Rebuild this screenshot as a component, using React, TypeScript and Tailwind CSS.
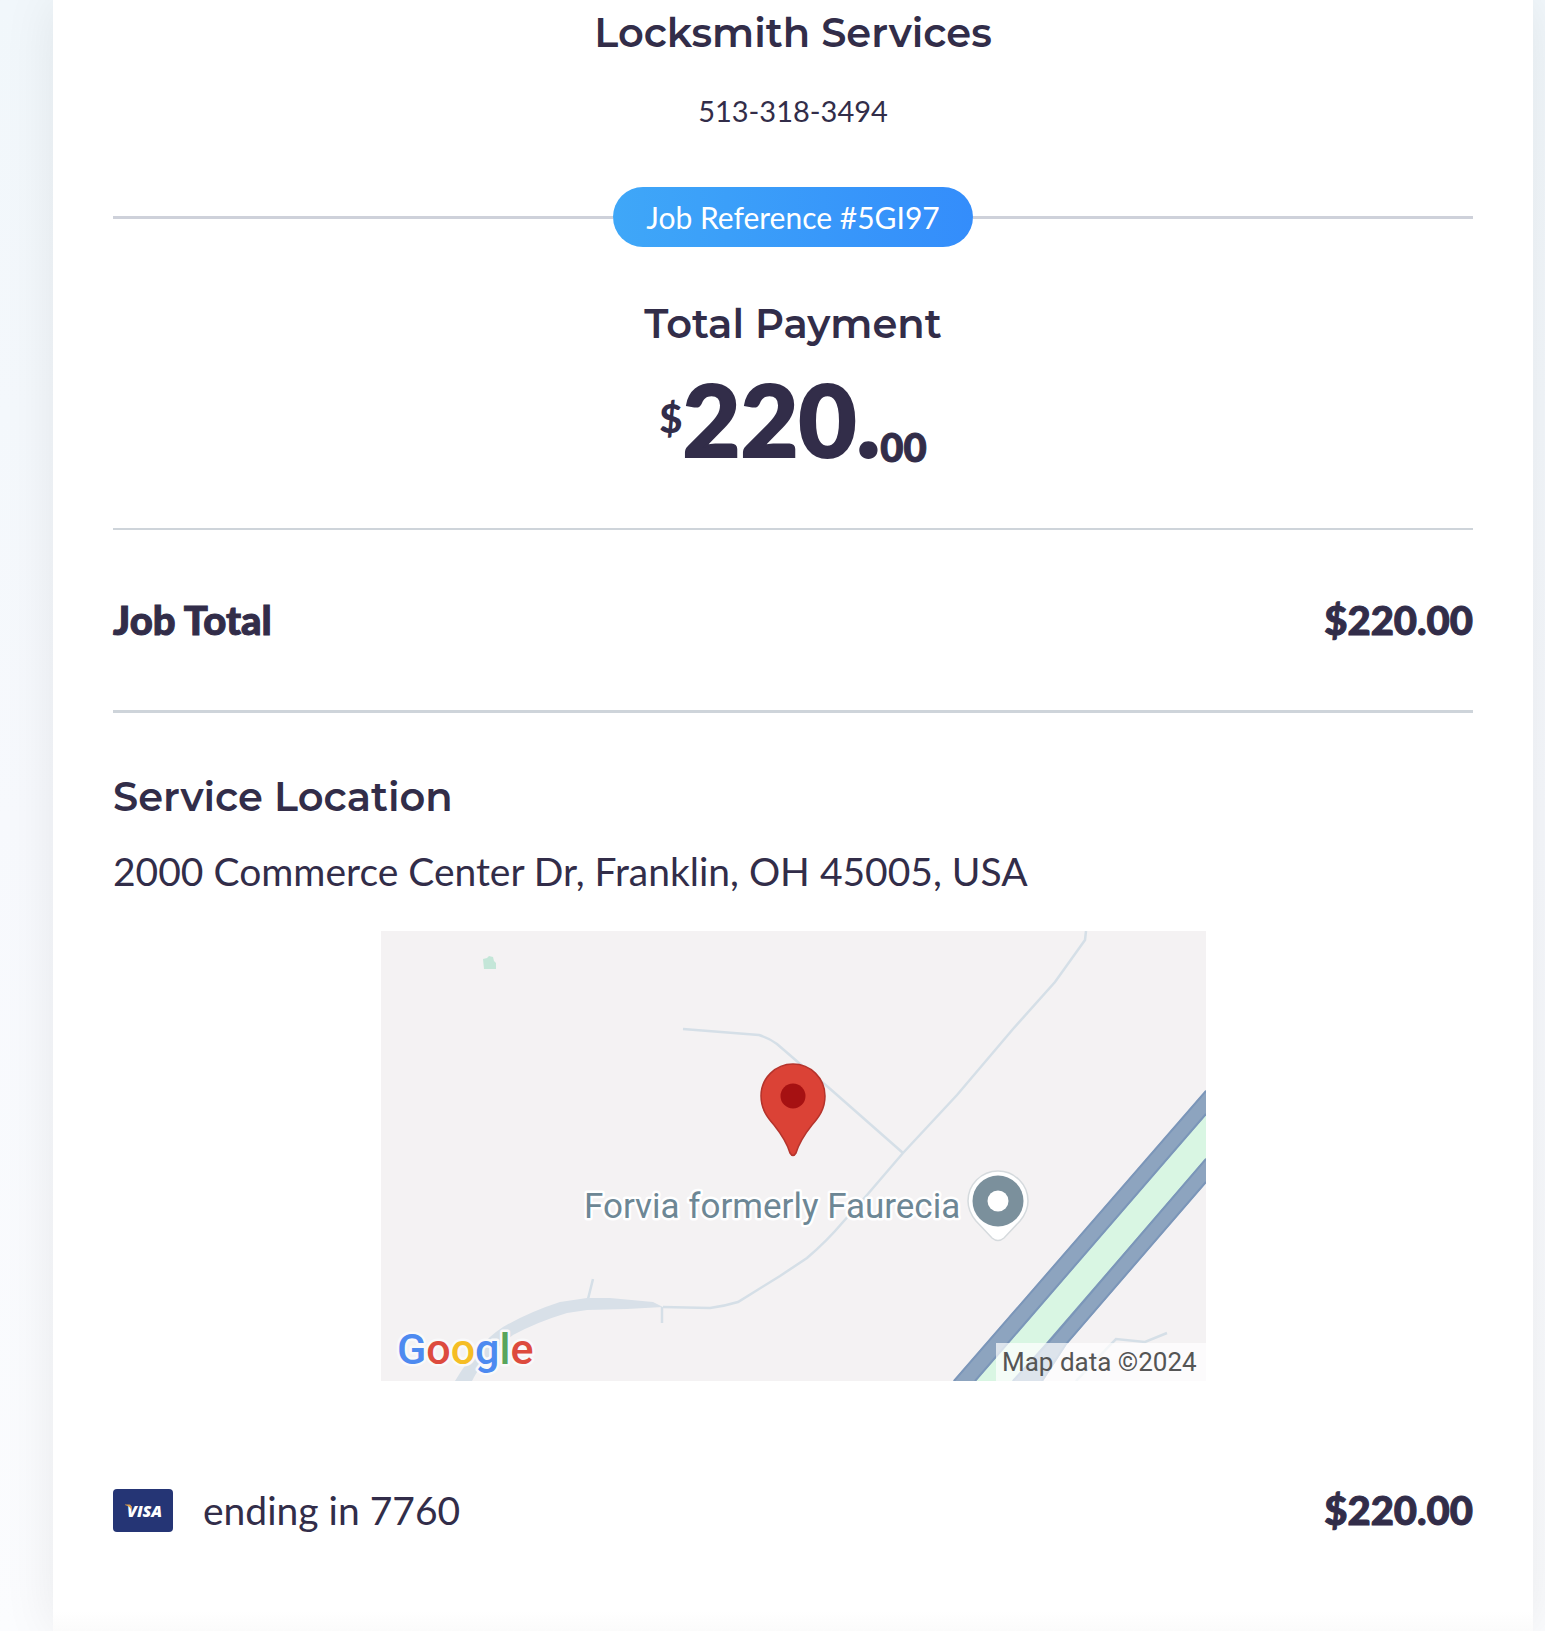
import type { ReactNode } from 'react';

const company = {
    name: 'Locksmith Services',
    phone: '513-318-3494',
};

const job = {
    reference: '5GI97',
    total: 220,
    address: '2000 Commerce Center Dr, Franklin, OH 45005, USA',
    cardLast4: '7760',
};

function formatAmount(amount: number) {
    return `$${amount.toFixed(2)}`;
}

function Heading({ children }: { children: ReactNode }) {
    return (
        <h2 className="font-[Montserrat,Inter,sans-serif] text-[40px] leading-[48px] font-semibold">
            {children}
        </h2>
    );
}

function TotalAmount({ amount }: { amount: number }) {
    const [dollars, cents] = amount.toFixed(2).split('.');

    return (
        <p className="mt-2.5 flex items-baseline justify-center text-[100px] leading-[120px] font-black">
            <span className="relative -top-6 text-[40px] leading-[48px]">
                $
            </span>
            <span className="[-webkit-text-stroke:2px_#322d49]">
                {dollars}.
            </span>
            <span className="relative top-[5px] text-[40px] leading-[48px] [-webkit-text-stroke:1px_#322d49]">
                {cents}
            </span>
        </p>
    );
}

function VisaIcon() {
    return (
        <svg
            viewBox="0 0 60 43"
            className="h-[43px] w-[60px] shrink-0"
            role="img"
            aria-label="Visa"
        >
            <rect width="60" height="43" rx="4" fill="#253575" />
            <text
                x="14"
                y="28"
                fontFamily="Open Sans, sans-serif"
                fontSize="16"
                fontWeight="800"
                fontStyle="italic"
                fill="#fff"
            >
                VISA
            </text>
            <path d="M12 15.500h4.500q1.500 0 1.800 2l.6 4C17.500 18.500 15 16.500 12 16z" fill="#e0a04a" />
        </svg>
    );
}

function ServiceMap() {
    return (
        <svg
            viewBox="0 0 825 450"
            className="w-[825px] max-w-full"
            role="img"
            aria-label="Map of the service location"
        >
            <rect width="825" height="450" fill="#f4f2f3" />
            <path d="M102 28l4-1 2-2 4 1 1 4 2 2v6h-12z" fill="#c4e6d8" />

            {/* local roads */}
            <g fill="none" stroke="#d5dfe7" strokeWidth="2.500">
                <path d="M302 98L340 101 378 104Q388 107 396 113L418 132 447 156 522 222" />
                <path d="M705 0L704 9 674 51 632 98 576 164 522 222 486 264 462 291Q446 310 426 327L399 345 357 371Q344 375 329 377L282 376" />
                <path d="M212 348L207 368M281 376V392" />
                <path d="M695 450L731 412 735 408 764 411 786 402" />
            </g>
            <path
                d="M282 376L272 371 229 367H206L179 371Q148 381 122 396 96 413 74 450H91Q103 426 132 404 156 391 186 382L206 379 246 378z"
                fill="#d8e0e8"
            />

            {/* highway */}
            <path d="M825 159L572 450H662L686 413 825 252z" fill="#8da4bf" />
            <path d="M825 184L595 450H631L665 412 825 227z" fill="#d9f6e3" />
            <g fill="none" stroke="#7b96b9" strokeWidth="2">
                <path d="M825 160L573 450" />
                <path d="M825 183L594 450" />
                <path d="M825 228L666 413 632 450" />
                <path d="M825 251L685 413 661 450" />
            </g>

            {/* nearby place */}
            <text
                x="203"
                y="287"
                fontFamily="Roboto, sans-serif"
                fontSize="35"
                fill="#6d8795"
                stroke="#fff"
                strokeWidth="5"
                strokeLinejoin="round"
                paintOrder="stroke"
            >
                Forvia formerly Faurecia
            </text>
            <path
                d="M617 240a30 30 0 0 1 30 30c0 8-3 14-8 20l-16 17q-6 5-12 0l-16-17c-5-6-8-12-8-20a30 30 0 0 1 30-30z"
                fill="#fff"
                stroke="#d5dadd"
                strokeWidth="1.500"
            />
            <circle cx="617" cy="270" r="25.500" fill="#7b909c" />
            <circle cx="617" cy="270" r="10.500" fill="#fff" />

            {/* job marker */}
            <path
                d="M412 133a32 32 0 0 1 32 32c0 13-6 21-13 29-8 10-13 18-16 28q-3 5-6 0c-3-10-8-18-16-28-7-8-13-16-13-29a32 32 0 0 1 32-32z"
                fill="#db4236"
                stroke="#b5332b"
                strokeWidth="1.500"
            />
            <circle cx="412" cy="165" r="12.500" fill="#a61112" />

            <text
                x="16"
                y="433"
                fontFamily="Roboto, sans-serif"
                fontSize="43"
                fontWeight="500"
                stroke="#f9f9fa"
                strokeWidth="5"
                strokeLinejoin="round"
                paintOrder="stroke"
            >
                <tspan fill="#4d8af0">G</tspan>
                <tspan fill="#dd4b3e">o</tspan>
                <tspan fill="#f5bd25">o</tspan>
                <tspan fill="#4d8af0">g</tspan>
                <tspan fill="#58a55c">l</tspan>
                <tspan fill="#dd4b3e">e</tspan>
            </text>

            <rect x="615" y="412" width="210" height="38" fill="#fff" fillOpacity="0.7" />
            <text
                x="621"
                y="440"
                fontFamily="Roboto, sans-serif"
                fontSize="26"
                fill="#555"
            >
                Map data ©2024
            </text>
        </svg>
    );
}

export default function App() {
    return (
        <div className="bg-linear-to-b from-[#f1f7fb] via-[#f7f9fd] to-[#fbfcfe] pr-3 pl-[53px] font-[Lato,sans-serif] text-[#322d49]">
            <main className="flex min-h-screen flex-col bg-white shadow-[0_0_50px_rgba(0,0,0,0.08)]">
                <div className="flex grow flex-col px-[60px] pt-[9px]">
                    <header className="text-center">
                        <Heading>{company.name}</Heading>
                        <a
                            href={`tel:${company.phone}`}
                            className="mt-9 block text-[29px] leading-9"
                        >
                            {company.phone}
                        </a>
                    </header>

                    <div className="mt-[58px] flex items-center">
                        <div className="h-[3px] grow bg-[#ced1da]" />
                        <p className="rounded-full bg-linear-to-r from-[#3fa7f8] to-[#348dfb] px-[33px] text-[30px] leading-[60px] text-white">
                            Job Reference #{job.reference}
                        </p>
                        <div className="h-[3px] grow bg-[#ced1da]" />
                    </div>

                    <section className="mt-[53px] border-b-2 border-[#ced4da] pb-[50px] text-center">
                        <Heading>Total Payment</Heading>
                        <TotalAmount amount={job.total} />
                    </section>

                    <section className="flex justify-between border-b-3 border-[#ced4da] py-[66px] text-[40px] leading-[48px] font-black [-webkit-text-stroke:1px_#322d49]">
                        <h3>Job Total</h3>
                        <p>{formatAmount(job.total)}</p>
                    </section>

                    <section className="mt-[60px]">
                        <Heading>Service Location</Heading>
                        <p className="mt-[26px] text-[39px] leading-[48px]">
                            {job.address}
                        </p>
                        <div className="mt-9 flex justify-center">
                            <ServiceMap />
                        </div>
                    </section>

                    <section className="mt-[105px] flex items-center text-[39px] leading-[48px]">
                        <VisaIcon />
                        <p className="ml-[30px]">ending in {job.cardLast4}</p>
                        <p className="ml-auto text-[40px] font-black [-webkit-text-stroke:1px_#322d49]">
                            {formatAmount(job.total)}
                        </p>
                    </section>
                </div>
                <div className="h-5 bg-linear-to-b from-white to-[#fbfbfb]" />
            </main>
        </div>
    );
}
